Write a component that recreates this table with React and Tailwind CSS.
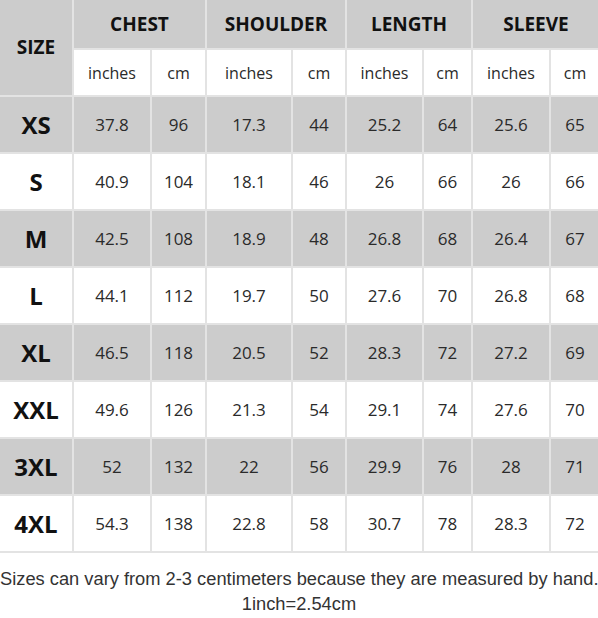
const ROWS = [
  ["XS",  "37.8", "96",  "17.3", "44", "25.2", "64", "25.6", "65"],
  ["S",   "40.9", "104", "18.1", "46", "26",   "66", "26",   "66"],
  ["M",   "42.5", "108", "18.9", "48", "26.8", "68", "26.4", "67"],
  ["L",   "44.1", "112", "19.7", "50", "27.6", "70", "26.8", "68"],
  ["XL",  "46.5", "118", "20.5", "52", "28.3", "72", "27.2", "69"],
  ["XXL", "49.6", "126", "21.3", "54", "29.1", "74", "27.6", "70"],
  ["3XL", "52",   "132", "22",   "56", "29.9", "76", "28",   "71"],
  ["4XL", "54.3", "138", "22.8", "58", "30.7", "78", "28.3", "72"],
];

const GROUPS = ["CHEST", "SHOULDER", "LENGTH", "SLEEVE"];

export default function App() {
  return (
    <div className="w-[598px] h-[618px] overflow-hidden bg-white">
      {/* Table */}
      <div
        className="grid gap-[2px] bg-[#e3e3e3] pb-[2px] w-[599px] text-[#2a2a2a] grid-cols-[72px_76px_53px_84px_52px_75px_47px_76px_48px] grid-rows-[48px_45px_repeat(8,55px)]"
        style={{ fontFamily: "'Open Sans', 'Noto Sans', sans-serif" }}>
        <div className="row-span-2 bg-[#cccccc] flex items-center justify-center text-[19px] font-bold text-[#111]">SIZE</div>
        {GROUPS.map(g => (
          <div key={g} className="col-span-2 bg-[#cccccc] flex items-center justify-center text-[19px] font-bold text-[#111]">{g}</div>
        ))}
        {GROUPS.map(g => [
          <div key={g + "in"} className="bg-white flex items-center justify-center text-[16px]">inches</div>,
          <div key={g + "cm"} className="bg-white flex items-center justify-center text-[16px]">cm</div>,
        ])}
        {ROWS.map((r, i) => {
          const bg = i % 2 === 0 ? "bg-[#cccccc]" : "bg-white";
          return r.map((v, j) => (
            <div key={i + "-" + j}
              className={`${bg} flex items-center justify-center ${j === 0 ? "text-[24px] font-bold text-[#111]" : "text-[17px]"}`}>
              {v}
            </div>
          ));
        })}
      </div>

      {/* Note */}
      <div className="pt-[13px] text-center text-[18.3px] leading-[25px] text-[#333] whitespace-nowrap"
        style={{ fontFamily: "'Liberation Sans', Arial, sans-serif" }}>
        <div>Sizes can vary from 2-3 centimeters because they are measured by hand.</div>
        <div>1inch=2.54cm</div>
      </div>
    </div>
  );
}
